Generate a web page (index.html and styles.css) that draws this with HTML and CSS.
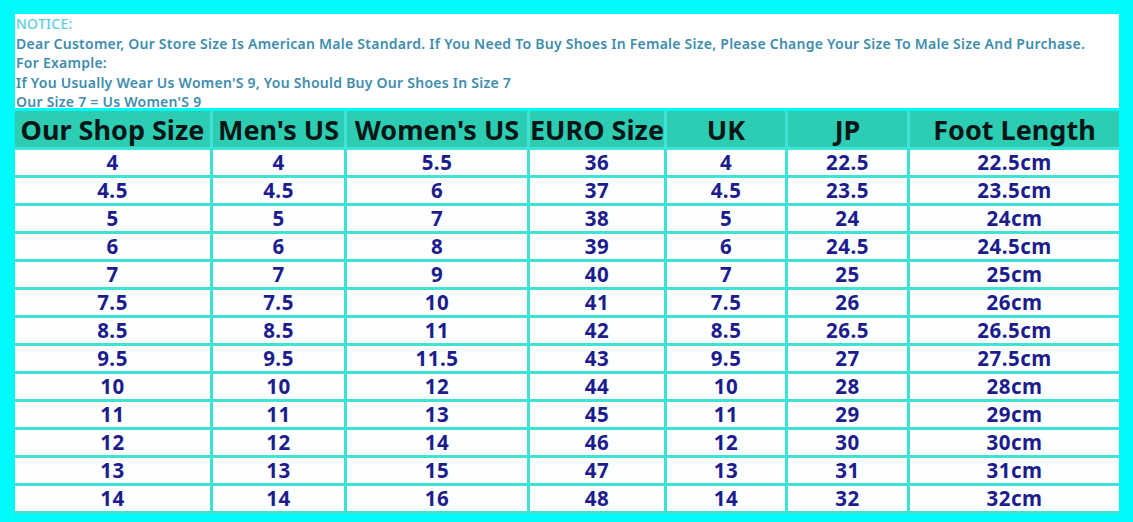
FILE: index.html
```html
<!DOCTYPE html>
<html>
<head>
<meta charset="utf-8">
<link rel="stylesheet" href="styles.css">
</head>
<body>
<div class="page">
  <div class="notice">
    <div class="notice-title">NOTICE:</div>
    <div>Dear Customer, Our Store Size Is American Male Standard. If You Need To Buy Shoes In Female Size, Please Change Your Size To Male Size And Purchase.</div>
    <div>For Example:</div>
    <div>If You Usually Wear Us Women'S 9, You Should Buy Our Shoes In Size 7</div>
    <div>Our Size 7 = Us Women'S 9</div>
  </div>
  <div class="table">
    <div class="th">Our Shop Size</div><div class="th">Men's US</div><div class="th">Women's US</div><div class="th">EURO Size</div><div class="th">UK</div><div class="th">JP</div><div class="th">Foot Length</div>
    <div class="td">4</div><div class="td">4</div><div class="td">5.5</div><div class="td">36</div><div class="td">4</div><div class="td">22.5</div><div class="td">22.5cm</div>
    <div class="td">4.5</div><div class="td">4.5</div><div class="td">6</div><div class="td">37</div><div class="td">4.5</div><div class="td">23.5</div><div class="td">23.5cm</div>
    <div class="td">5</div><div class="td">5</div><div class="td">7</div><div class="td">38</div><div class="td">5</div><div class="td">24</div><div class="td">24cm</div>
    <div class="td">6</div><div class="td">6</div><div class="td">8</div><div class="td">39</div><div class="td">6</div><div class="td">24.5</div><div class="td">24.5cm</div>
    <div class="td">7</div><div class="td">7</div><div class="td">9</div><div class="td">40</div><div class="td">7</div><div class="td">25</div><div class="td">25cm</div>
    <div class="td">7.5</div><div class="td">7.5</div><div class="td">10</div><div class="td">41</div><div class="td">7.5</div><div class="td">26</div><div class="td">26cm</div>
    <div class="td">8.5</div><div class="td">8.5</div><div class="td">11</div><div class="td">42</div><div class="td">8.5</div><div class="td">26.5</div><div class="td">26.5cm</div>
    <div class="td">9.5</div><div class="td">9.5</div><div class="td">11.5</div><div class="td">43</div><div class="td">9.5</div><div class="td">27</div><div class="td">27.5cm</div>
    <div class="td">10</div><div class="td">10</div><div class="td">12</div><div class="td">44</div><div class="td">10</div><div class="td">28</div><div class="td">28cm</div>
    <div class="td">11</div><div class="td">11</div><div class="td">13</div><div class="td">45</div><div class="td">11</div><div class="td">29</div><div class="td">29cm</div>
    <div class="td">12</div><div class="td">12</div><div class="td">14</div><div class="td">46</div><div class="td">12</div><div class="td">30</div><div class="td">30cm</div>
    <div class="td">13</div><div class="td">13</div><div class="td">15</div><div class="td">47</div><div class="td">13</div><div class="td">31</div><div class="td">31cm</div>
    <div class="td">14</div><div class="td">14</div><div class="td">16</div><div class="td">48</div><div class="td">14</div><div class="td">32</div><div class="td">32cm</div>
  </div>
</div>
</body>
</html>
```
FILE: styles.css
```css
html, body {
  margin: 0;
  padding: 0;
  background: #00fafa;
}
.page {
  width: 1104px;
  padding: 14px 0 0 15px;
  font-family: "Noto Sans", "Open Sans", sans-serif;
}
.notice {
  background: #ffffff;
  height: 94px;
  box-sizing: border-box;
  padding: 0 0 0 1px;
  font-size: 14px;
  line-height: 19.5px;
  letter-spacing: 0.25px;
  color: #3e8cae;
  font-weight: 600;
  white-space: nowrap;
}
.notice-title {
  color: #5ccfe0;
  font-weight: 500;
}
.table {
  margin-top: 3px;
  display: grid;
  grid-template-columns: 195px 131px 180px 134px 118px 119px 209px;
  grid-template-rows: 36px repeat(13, 25px);
  gap: 3px;
  background: #3fe3d6;
  border-bottom: 3px solid #3fe3d6;
}
.th {
  background: #2ccdb2;
  color: #061616;
  font-size: 27px;
  font-weight: 700;
  display: flex;
  align-items: center;
  justify-content: center;
  white-space: nowrap;
  padding-top: 1px;
}
.td {
  background: #fdfefe;
  color: #1c1c8e;
  font-size: 20.5px;
  font-weight: 700;
  letter-spacing: 0.5px;
  line-height: 25px;
  height: 25px;
  text-align: center;
  white-space: nowrap;
}
```
